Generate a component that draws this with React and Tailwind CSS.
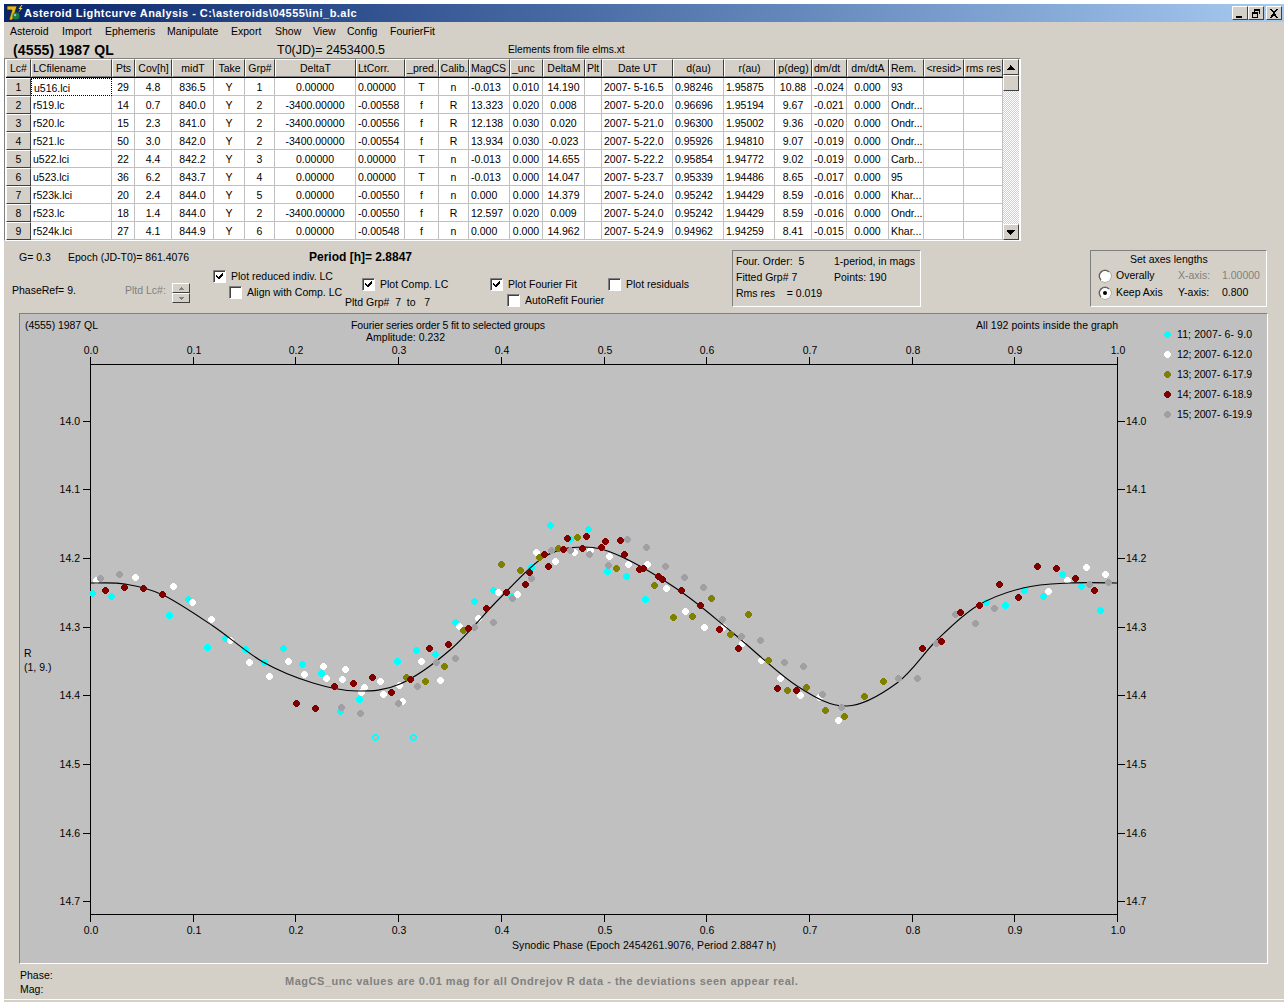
import React from 'react';

const cols = 'grid grid-cols-[25px_81px_23px_37px_42px_31px_30px_81px_49px_34px_30px_41px_33px_42px_17px_71px_51px_51px_37px_35px_42px_35px_40px_39px]';

const headers = ['Lc#', 'LCfilename', 'Pts', 'Cov[h]', 'midT', 'Take', 'Grp#', 'DeltaT', 'LtCorr.', '_pred.', 'Calib.', 'MagCS', '_unc', 'DeltaM', 'Plt', 'Date UT', 'd(au)', 'r(au)', 'p(deg)', 'dm/dt', 'dm/dtA', 'Rem.', '<resid>', 'rms res'];
const headerLeft = [1, 8, 11, 12, 14, 19, 21];
const cellLeft = [1, 8, 11, 15, 16, 17, 19, 21];

const rows = [
  ['1', 'u516.lci', '29', '4.8', '836.5', 'Y', '1', '0.00000', '0.00000', 'T', 'n', '-0.013', '0.010', '14.190', '', '2007- 5-16.5', '0.98246', '1.95875', '10.88', '-0.024', '0.000', '93', '', ''],
  ['2', 'r519.lc', '14', '0.7', '840.0', 'Y', '2', '-3400.00000', '-0.00558', 'f', 'R', '13.323', '0.020', '0.008', '', '2007- 5-20.0', '0.96696', '1.95194', '9.67', '-0.021', '0.000', 'Ondr...', '', ''],
  ['3', 'r520.lc', '15', '2.3', '841.0', 'Y', '2', '-3400.00000', '-0.00556', 'f', 'R', '12.138', '0.030', '0.020', '', '2007- 5-21.0', '0.96300', '1.95002', '9.36', '-0.020', '0.000', 'Ondr...', '', ''],
  ['4', 'r521.lc', '50', '3.0', '842.0', 'Y', '2', '-3400.00000', '-0.00554', 'f', 'R', '13.934', '0.030', '-0.023', '', '2007- 5-22.0', '0.95926', '1.94810', '9.07', '-0.019', '0.000', 'Ondr...', '', ''],
  ['5', 'u522.lci', '22', '4.4', '842.2', 'Y', '3', '0.00000', '0.00000', 'T', 'n', '-0.013', '0.000', '14.655', '', '2007- 5-22.2', '0.95854', '1.94772', '9.02', '-0.019', '0.000', 'Carb...', '', ''],
  ['6', 'u523.lci', '36', '6.2', '843.7', 'Y', '4', '0.00000', '0.00000', 'T', 'n', '-0.013', '0.000', '14.047', '', '2007- 5-23.7', '0.95339', '1.94486', '8.65', '-0.017', '0.000', '95', '', ''],
  ['7', 'r523k.lci', '20', '2.4', '844.0', 'Y', '5', '0.00000', '-0.00550', 'f', 'n', '0.000', '0.000', '14.379', '', '2007- 5-24.0', '0.95242', '1.94429', '8.59', '-0.016', '0.000', 'Khar...', '', ''],
  ['8', 'r523.lc', '18', '1.4', '844.0', 'Y', '2', '-3400.00000', '-0.00550', 'f', 'R', '12.597', '0.020', '0.009', '', '2007- 5-24.0', '0.95242', '1.94429', '8.59', '-0.016', '0.000', 'Ondr...', '', ''],
  ['9', 'r524k.lci', '27', '4.1', '844.9', 'Y', '6', '0.00000', '-0.00548', 'f', 'n', '0.000', '0.000', '14.962', '', '2007- 5-24.9', '0.94962', '1.94259', '8.41', '-0.015', '0.000', 'Khar...', '', ''],
];

const menu = [
  ['Asteroid', 'w-[52px]'],
  ['Import', 'w-[43px]'],
  ['Ephemeris', 'w-[62px]'],
  ['Manipulate', 'w-[64px]'],
  ['Export', 'w-[44px]'],
  ['Show', 'w-[38px]'],
  ['View', 'w-[34px]'],
  ['Config', 'w-[43px]'],
  ['FourierFit', 'w-[60px]'],
];

// dot positions read off the plot, in page pixels
const zoomed = (ox, oy, pts) => pts.map(([x, y]) => [x / 3 + ox, y / 3 + oy]);

const cyan = [
  ...zoomed(80, 540, [[37, 160], [94, 169], [268, 226], [325, 178], [382, 322], [437, 295], [496, 328], [553, 367], [610, 325], [667, 373], [725, 400], [781, 514], [838, 478], [952, 364], [1009, 331]]),
  ...zoomed(400, 510, [[451, 46], [565, 58], [511, 88], [395, 171], [280, 241], [223, 274], [166, 337], [106, 433], [335, 259], [622, 184], [679, 199], [736, 268]]),
  ...zoomed(760, 540, [[679, 187], [736, 196], [793, 151], [850, 169], [907, 103], [964, 139], [1021, 211]]),
];
const cyanOpen = zoomed(80, 540, [[886, 592], [1000, 592]]);
const white = [
  ...zoomed(80, 540, [[50, 120], [166, 112], [280, 139], [337, 187], [394, 238], [451, 301], [508, 367], [568, 409], [625, 364], [673, 403], [730, 379], [739, 415], [796, 388], [787, 418], [853, 442], [844, 457], [901, 424], [910, 463], [958, 436], [967, 484], [1024, 364]]),
  ...zoomed(400, 510, [[409, 127], [466, 154], [523, 127], [571, 121], [628, 139], [685, 163], [742, 163], [799, 235], [856, 304], [913, 352], [295, 247], [352, 253], [235, 325], [178, 349], [121, 511], [970, 352], [1027, 400]]),
  ...zoomed(760, 540, [[4, 361], [61, 415], [121, 466], [178, 472], [235, 541], [865, 154], [922, 121], [979, 82], [1036, 103]]),
];
const olive = [
  ...zoomed(80, 540, [[979, 412], [1036, 424]]),
  ...zoomed(400, 510, [[304, 163], [361, 181], [418, 142], [475, 115], [532, 82], [649, 175], [763, 226], [820, 322], [877, 319], [934, 265], [1045, 313], [991, 373], [190, 361], [133, 469]]),
  ...zoomed(760, 540, [[25, 361], [82, 451], [139, 442], [196, 511], [253, 529], [313, 469], [370, 424]]),
];
const gray = [
  ...zoomed(80, 540, [[61, 115], [118, 103], [784, 502], [841, 520], [955, 490], [1012, 439]]),
  ...zoomed(400, 510, [[454, 121], [511, 121], [568, 133], [625, 166], [682, 88], [739, 112], [796, 169], [853, 202], [910, 232], [967, 328], [1024, 379], [394, 205], [337, 265], [280, 337], [223, 352], [166, 445], [109, 458]]),
  ...zoomed(760, 540, [[1, 301], [73, 367], [130, 379], [187, 463], [244, 502], [415, 415], [472, 415], [529, 310], [586, 223], [646, 250], [703, 205], [988, 133], [1045, 127]]),
];
const red = [
  ...zoomed(80, 540, [[76, 151], [133, 142], [190, 145], [247, 163], [649, 490], [706, 505], [763, 439], [820, 430], [877, 412], [934, 457], [991, 418], [1048, 325]]),
  ...zoomed(400, 510, [[502, 85], [559, 79], [616, 94], [661, 91], [604, 112], [547, 115], [490, 118], [433, 133], [388, 187], [445, 169], [376, 223], [319, 247], [259, 295], [205, 355], [145, 403], [673, 133], [718, 178], [730, 175], [775, 199], [787, 208], [844, 241], [901, 286], [958, 358], [1015, 415]]),
  ...zoomed(760, 540, [[52, 445], [109, 451], [487, 325], [544, 304], [601, 217], [658, 196], [718, 133], [775, 172], [832, 79], [889, 85], [946, 115], [1003, 151]]),
];

const curve = [[91, 583], [125, 584], [163, 595], [213, 626], [263, 662], [313, 683], [357, 691], [400, 684], [450, 650], [500, 598], [544, 557], [583, 547], [620, 556], [680, 591], [733, 633], [797, 686], [847, 706], [897, 683], [937, 640], [977, 606], [1023, 588], [1070, 583], [1117, 583]];

// catmull-rom through the read-off points so the fit stays smooth
const smooth = (p) => {
  let d = `M${p[0][0]} ${p[0][1]}`;
  for (let i = 0; i < p.length - 1; i++) {
    const a = p[Math.max(i - 1, 0)];
    const b = p[i];
    const c = p[i + 1];
    const e = p[Math.min(i + 2, p.length - 1)];
    d += `C${b[0] + (c[0] - a[0]) / 6} ${b[1] + (c[1] - a[1]) / 6} ${c[0] - (e[0] - b[0]) / 6} ${c[1] - (e[1] - b[1]) / 6} ${c[0]} ${c[1]}`;
  }
  return d;
};

// 7px GDI style ellipse: rows of 3,5,7,7,7,5,3 pixels
const dot = (x, y) => {
  const l = Math.floor(x) - 3;
  const t = Math.floor(y) - 3;
  return `M${l + 2} ${t}h3v1h1v1h1v3h-1v1h-1v1h-3v-1h-1v-1h-1v-3h1v-1h1z`;
};

const legend = [
  ['#00ffff', '11; 2007- 6- 9.0'],
  ['#ffffff', '12; 2007- 6-12.0'],
  ['#808000', '13; 2007- 6-17.9'],
  ['#800000', '14; 2007- 6-18.9'],
  ['#a0a0a4', '15; 2007- 6-19.9'],
];

const xTicks = ['0.0', '0.1', '0.2', '0.3', '0.4', '0.5', '0.6', '0.7', '0.8', '0.9', '1.0'];
const yTicks = [['14.0', 421], ['14.1', 489], ['14.2', 558], ['14.3', 627], ['14.4', 695], ['14.5', 764], ['14.6', 833], ['14.7', 901]];

const Dots = ({ pts, fill }) => (
  <path fill={fill} d={pts.map(([x, y]) => dot(x, y)).join('')} />
);

const Plot = () => (
  <svg width="1249" height="651" viewBox="19 313 1249 651" className="block" shapeRendering="crispEdges" fontFamily="'Liberation Sans', sans-serif" fontSize="10.5" fill="#000">
    <text x="25" y="329" textLength="73">(4555) 1987 QL</text>
    <text x="351" y="329" textLength="194">Fourier series order 5 fit to selected groups</text>
    <text x="366" y="341" textLength="79">Amplitude: 0.232</text>
    <text x="976" y="329" textLength="142">All 192 points inside the graph</text>

    <rect x="90.5" y="364.5" width="1027" height="550" fill="none" stroke="#000" />
    {xTicks.map((t, i) => {
      const x = Math.round(90 + i * 102.7) + 0.5;
      return (
        <g key={t}>
          <path d={`M${x} 357V364M${x} 915V922`} stroke="#000" fill="none" />
          <text x={x + 0.5} y="354" textAnchor="middle">{t}</text>
          <text x={x + 0.5} y="934" textAnchor="middle">{t}</text>
        </g>
      );
    })}
    {yTicks.map(([t, y]) => (
      <g key={t}>
        <path d={`M83 ${y + 0.5}H90M1118 ${y + 0.5}H1125`} stroke="#000" fill="none" />
        <text x="80" y={y + 4} textAnchor="end">{t}</text>
        <text x="1126" y={y + 4}>{t}</text>
      </g>
    ))}
    <text x="512" y="949" textLength="264">Synodic Phase (Epoch 2454261.9076, Period 2.8847 h)</text>
    <text x="24" y="657">R</text>
    <text x="24" y="671">(1, 9.)</text>

    <Dots pts={cyan} fill="#00ffff" />
    <Dots pts={cyanOpen} fill="#00ffff" />
    {cyanOpen.map(([x, y], i) => (
      <path key={i} d={`M${Math.floor(x) - 1} ${Math.floor(y) - 1}h3v3h-3zM${Math.floor(x)} ${Math.floor(y)}v1h1v-1z`} fill="#c0c0c0" fillRule="evenodd" />
    ))}
    <Dots pts={white} fill="#ffffff" />
    <path d={smooth(curve)} fill="none" stroke="#000" strokeWidth="1.1" shapeRendering="auto" />
    <Dots pts={olive} fill="#808000" />
    <Dots pts={gray} fill="#a0a0a4" />
    <Dots pts={red} fill="#800000" />

    {legend.map(([c, t], i) => (
      <g key={t}>
        <path d={dot(1167, 334 + i * 20)} fill={c} />
        <text x="1177" y={338 + i * 20} textLength="75">{t}</text>
      </g>
    ))}
  </svg>
);

const Check = ({ checked, label, className }) => (
  <div className={`flex items-center h-[14px] ${className}`}>
    <span className="w-[13px] h-[13px] bg-white border border-t-[#808080] border-l-[#808080] border-b-white border-r-white shadow-[inset_1px_1px_0_#404040] flex items-center justify-center shrink-0">
      {checked && (
        <svg width="9" height="9" viewBox="0 0 9 9" shapeRendering="crispEdges">
          <path d="M1 3h1v1h1v1h1V4h1V3h1V2h1V1h1v2H8v1H7v1H6v1H5v1H3V6H2V5H1z" fill="#000" />
        </svg>
      )}
    </span>
    <span className="ml-[5px] whitespace-nowrap">{label}</span>
  </div>
);

const Radio = ({ checked, label }) => (
  <div className="flex items-center h-[16px]">
    <span className="w-[12px] h-[12px] rounded-full bg-white border border-t-[#555] border-l-[#555] border-b-white border-r-white shadow-[0_0_0_0.5px_#808080] flex items-center justify-center shrink-0">
      {checked && <span className="w-[4px] h-[4px] rounded-full bg-black" />}
    </span>
    <span className="ml-[5px] whitespace-nowrap">{label}</span>
  </div>
);

const CapButton = ({ children }) => (
  <div className="w-[16px] h-[14px] bg-[#d4d0c8] border border-t-white border-l-white border-b-[#404040] border-r-[#404040] flex items-center justify-center">
    <svg width="10" height="9" viewBox="0 0 10 9" shapeRendering="crispEdges">{children}</svg>
  </div>
);

const ArrowButton = ({ d, className }) => (
  <div className={`bg-[#d4d0c8] border border-t-white border-l-white border-b-[#404040] border-r-[#404040] flex items-center justify-center ${className}`}>
    <svg width="8" height="5" viewBox="0 0 8 5" shapeRendering="crispEdges"><path d={d} fill="#000" /></svg>
  </div>
);

export default function App() {
  return (
    <div className="w-[1288px] h-[1002px] bg-white pt-[4px] px-[4px] overflow-hidden font-['Liberation_Sans',sans-serif] text-[10.5px] leading-[13px] text-black">
      <div className="h-[998px] bg-[#d4d0c8] flex flex-col">
        {/* Title bar */}
        <div className="h-[18px] shrink-0 bg-gradient-to-r from-[#0a246a] to-[#a6caf0] flex items-center pl-[2px] pr-[2px]">
          <svg width="17" height="17" viewBox="0 0 17 17" className="shrink-0">
            <path d="M1 1h10L6.5 15H3L6 5H1z" fill="#e8b818" stroke="#202008" strokeWidth="0.7" />
            <circle cx="10" cy="11" r="3.6" fill="#1f7a3a" />
            <circle cx="9" cy="10" r="1.3" fill="#70c8d8" />
            <path d="M15.5 0l-3 4h2l-2.5 4 4.5-5h-2l2-3z" fill="#f8e820" />
          </svg>
          <span className="ml-[1px] text-white font-bold text-[11px] tracking-[0.46px] whitespace-nowrap">
            Asteroid Lightcurve Analysis - C:\asteroids\04555\ini_b.alc
          </span>
          <div className="ml-auto flex">
            <CapButton><path d="M1 7h6v2H1z" fill="#000" /></CapButton>
            <CapButton><path d="M3 0h6v5H8V2H4v1H3zM1 3h6v6H1zM2 5v3h4V5z" fill="#000" fillRule="evenodd" /></CapButton>
            <div className="w-[2px]" />
            <CapButton><path d="M1 0h2l2 3 2-3h2L6 4l3 5H7L5 6 3 9H1l3-5z" fill="#000" /></CapButton>
          </div>
        </div>

        {/* Menu */}
        <div className="h-[18px] shrink-0 flex items-center pl-[6px]">
          {menu.map(([m, w]) => (
            <span key={m} className={`${w} whitespace-nowrap`}>{m}</span>
          ))}
        </div>

        {/* Name row */}
        <div className="h-[18px] shrink-0 flex items-center pt-[2px]">
          <span className="ml-[9px] w-[264px] font-bold text-[14px] tracking-[0.15px] whitespace-nowrap">(4555) 1987 QL</span>
          <span className="w-[231px] text-[12.5px] whitespace-nowrap">T0(JD)= 2453400.5</span>
          <span className="text-[10.2px] -mt-[2px] whitespace-nowrap">Elements from file elms.xt</span>
        </div>

        {/* Grid */}
        <div className="w-[1017px] h-[183px] shrink-0 border border-t-[#808080] border-l-[#808080] border-b-white border-r-white bg-white flex pl-[1px]">
          <div className="w-[997px] shrink-0 overflow-hidden">
            <div className={`${cols} h-[19px] border-b border-black`}>
              {headers.map((h, i) => (
                <div key={h} className={`bg-[#d4d0c8] border border-t-white border-l-white border-b-[#808080] border-r-[#404040] pt-[1px] flex items-center overflow-hidden whitespace-nowrap ${headerLeft.includes(i) ? 'pl-[1px]' : 'justify-center'}`}>
                  {h}
                </div>
              ))}
            </div>
            {rows.map((r) => (
              <div key={r[0]} className={`${cols} h-[18px]`}>
                {r.map((c, i) =>
                  i === 0 ? (
                    <div key={i} className="bg-[#d4d0c8] border border-t-white border-l-white border-b-[#404040] border-r-[#404040] pt-[1px] flex items-center justify-center">{c}</div>
                  ) : (
                    <div key={i} className={`pt-[2px] border-r border-b border-[#c0c0c0] flex items-center whitespace-pre overflow-hidden ${cellLeft.includes(i) ? 'pl-[2px]' : 'justify-center'} ${i === 1 && r[0] === '1' ? 'border border-dotted border-black pl-[1px]' : ''}`}>
                      {c}
                    </div>
                  ),
                )}
              </div>
            ))}
          </div>
          <div className="w-[16px] shrink-0 flex flex-col bg-[repeating-conic-gradient(#d4d0c8_0_25%,#ffffff_0_50%)] bg-[length:2px_2px]">
            <ArrowButton d="M3 0h1v1h1v1h1v1h1v1h1v1H0V4h1V3h1V2h1z" className="h-[16px]" />
            <div className="h-[16px] bg-[#d4d0c8] border border-t-white border-l-white border-b-[#404040] border-r-[#404040]" />
            <div className="flex-1" />
            <ArrowButton d="M0 0h8v1H7v1H6v1H5v1H4v1H3V4H2V3H1V2H0z" className="h-[16px]" />
          </div>
        </div>

        {/* Controls strip */}
        <div className="h-[72px] shrink-0 flex">
          <div className="w-[728px] shrink-0">
            <div className="h-[27px] flex items-center pt-[5px]">
              <span className="ml-[15px] w-[49px] whitespace-nowrap">G= 0.3</span>
              <span className="w-[241px] whitespace-nowrap">Epoch (JD-T0)= 861.4076</span>
              <span className="font-bold text-[12px] whitespace-nowrap">Period [h]= 2.8847</span>
            </div>
            <div className="flex">
              <div className="w-[121px] pl-[8px] pt-[16px] whitespace-nowrap shrink-0">PhaseRef= 9.</div>
              <div className="w-[88px] shrink-0 flex pt-[15px] text-[#808080]">
                <span className="whitespace-nowrap mt-[1px] w-[47px]">Pltd Lc#:</span>
                <div className="flex flex-col">
                  <div className="w-[18px] h-[10px] bg-[#d4d0c8] border border-t-white border-l-white border-b-[#404040] border-r-[#404040] flex items-center justify-center">
                    <svg width="5" height="3" viewBox="0 0 5 3" shapeRendering="crispEdges"><path d="M2 0h1v1h1v1h1v1H0V2h1V1h1z" fill="#808080" /></svg>
                  </div>
                  <div className="w-[18px] h-[10px] bg-[#d4d0c8] border border-t-white border-l-white border-b-[#404040] border-r-[#404040] flex items-center justify-center">
                    <svg width="5" height="3" viewBox="0 0 5 3" shapeRendering="crispEdges"><path d="M0 0h5v1H4v1H3v1H2V2H1V1H0z" fill="#808080" /></svg>
                  </div>
                </div>
              </div>
              <div className="w-[149px] shrink-0 flex flex-col gap-[2px] pt-[1px]">
                <Check checked label="Plot reduced indiv. LC" />
                <Check label="Align with Comp. LC" className="ml-[16px]" />
              </div>
              <div className="w-[128px] shrink-0 pt-[9px] flex flex-col">
                <Check checked label="Plot Comp. LC" />
                <div className="-ml-[17px] mt-[5px] whitespace-pre">Pltd Grp#  7  to   7</div>
              </div>
              <div className="w-[118px] shrink-0 pt-[9px] flex flex-col gap-[2px]">
                <Check checked label="Plot Fourier Fit" />
                <Check label="AutoRefit Fourier" className="ml-[17px]" />
              </div>
              <div className="shrink-0 pt-[9px]">
                <Check label="Plot residuals" />
              </div>
            </div>
          </div>

          <div className="w-[189px] h-[57px] mt-[9px] shrink-0 border border-t-[#808080] border-l-[#808080] border-b-white border-r-white grid grid-cols-[98px_1fr] pl-[3px] pt-[2px] auto-rows-[16px] items-center whitespace-pre">
            <span>Four. Order:  5</span>
            <span>1-period, in mags</span>
            <span>Fitted Grp# 7</span>
            <span>Points: 190</span>
            <span>Rms res    = 0.019</span>
          </div>

          <div className="ml-[169px] w-[177px] h-[57px] mt-[9px] shrink-0 border border-t-[#808080] border-l-[#808080] border-b-white border-r-white pl-[8px]">
            <div className="pl-[31px] h-[16px] flex items-center">Set axes lengths</div>
            <div className="grid grid-cols-[79px_44px_1fr] auto-rows-[17px] items-center">
              <Radio label="Overally" />
              <span className="text-[#808080]">X-axis:</span>
              <span className="text-[#808080]">1.00000</span>
              <Radio checked label="Keep Axis" />
              <span>Y-axis:</span>
              <span>0.800</span>
            </div>
          </div>
        </div>

        {/* Plot */}
        <div className="ml-[15px] w-[1249px] h-[651px] shrink-0 bg-[#c0c0c0] relative">
          <Plot />
          <div className="absolute inset-0 border border-t-[#808080] border-l-[#808080] border-b-white border-r-white pointer-events-none" />
        </div>

        {/* Status */}
        <div className="flex-1 flex relative">
          <div className="ml-[16px] mt-[5px] w-[265px] flex flex-col gap-[1px]">
            <span>Phase:</span>
            <span>Mag:</span>
          </div>
          <span className="mt-[11px] font-bold text-[11px] text-[#808080] tracking-[0.52px] whitespace-nowrap">
            MagCS_unc values are 0.01 mag for all Ondrejov R data - the deviations seen appear real.
          </span>
        </div>
        <div className="h-[1px] bg-white shrink-0" />
        <div className="h-[2px] shrink-0" />
      </div>
    </div>
  );
}
